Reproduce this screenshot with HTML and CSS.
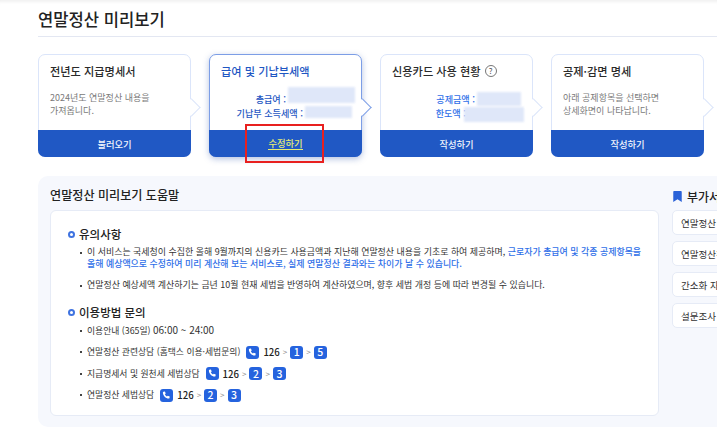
FILE: index.html
```html
<!DOCTYPE html>
<html lang="ko">
<head>
<meta charset="utf-8">
<title>연말정산 미리보기</title>
<link rel="stylesheet" href="styles.css">
</head>
<body>
<div class="page">
  <h1 class="title">연말정산 미리보기</h1>
  <div class="cards">
    <section class="card">
      <div class="card-body">
        <h2 class="card-title">전년도 지급명세서</h2>
        <p class="card-desc">2024년도 연말정산 내용을<br>가져옵니다.</p>
      </div>
      <a class="card-btn">불러오기</a>
      <span class="arrow"></span>
    </section>
    <section class="card active">
      <div class="card-body">
        <h2 class="card-title">급여 및 기납부세액</h2>
        <div class="amounts">
          <div class="amount">총급여 : <span class="mask w1"></span></div>
          <div class="amount">기납부 소득세액 : <span class="mask w2"></span></div>
        </div>
      </div>
      <a class="card-btn"><span class="edit">수정하기</span></a>
      <span class="arrow"></span>
      <span class="highlight"></span>
    </section>
    <section class="card">
      <div class="card-body">
        <h2 class="card-title">신용카드 사용 현황 <span class="help">?</span></h2>
        <div class="amounts">
          <div class="amount">공제금액 : <span class="mask w3"></span></div>
          <div class="amount">한도액 : <span class="mask w4"></span></div>
        </div>
      </div>
      <a class="card-btn">작성하기</a>
      <span class="arrow"></span>
    </section>
    <section class="card">
      <div class="card-body">
        <h2 class="card-title">공제·감면 명세</h2>
        <p class="card-desc">아래 공제항목을 선택하면<br>상세화면이 나타납니다.</p>
      </div>
      <a class="card-btn">작성하기</a>
      <span class="arrow"></span>
    </section>
  </div>
  <div class="panel">
    <div class="help-col">
      <h2 class="panel-title">연말정산 미리보기 도움말</h2>
      <div class="help-box">
        <h3 class="sub">유의사항</h3>
        <ul class="list first">
          <li>이 서비스는 국세청이 수집한 올해 9월까지의 신용카드 사용금액과 지난해 연말정산 내용을 기초로 하여 제공하며, <b class="blue">근로자가 총급여 및 각종 공제항목을<br>올해 예상액으로 수정하여 미리 계산해 보는 서비스로, 실제 연말정산 결과와는 차이가 날 수 있습니다.</b></li>
          <li>연말정산 예상세액 계산하기는 금년 10월 현재 세법을 반영하여 계산하였으며, 향후 세법 개정 등에 따라 변경될 수 있습니다.</li>
        </ul>
        <h3 class="sub second">이용방법 문의</h3>
        <ul class="list">
          <li>이용안내 (365일) <span class="time">06:00 ~ 24:00</span></li>
          <li class="tel">연말정산 관련상담 (홈택스 이용·세법문의)
            <span class="phone"><svg viewBox="0 0 14 14"><path d="M3.200 2.200 5 1.900l1 2.600-1.100 1c.5 1.300 1.400 2.200 2.700 2.800l1-1.100 2.500 1-.3 1.900c-.1.500-.5.800-1 .8C6 10.800 2.500 7.300 2.400 3.200c0-.5.300-.9.800-1Z" fill="#fff"/></svg></span>
            <b>126</b><i>&gt;</i><span class="num">1</span><i>&gt;</i><span class="num">5</span></li>
          <li class="tel">지급명세서 및 원천세 세법상담
            <span class="phone"><svg viewBox="0 0 14 14"><path d="M3.200 2.200 5 1.900l1 2.600-1.100 1c.5 1.300 1.400 2.200 2.700 2.800l1-1.100 2.500 1-.3 1.900c-.1.500-.5.800-1 .8C6 10.800 2.500 7.300 2.400 3.200c0-.5.300-.9.800-1Z" fill="#fff"/></svg></span>
            <b>126</b><i>&gt;</i><span class="num">2</span><i>&gt;</i><span class="num">3</span></li>
          <li class="tel">연말정산 세법상담
            <span class="phone"><svg viewBox="0 0 14 14"><path d="M3.200 2.200 5 1.900l1 2.600-1.100 1c.5 1.300 1.400 2.200 2.700 2.800l1-1.100 2.500 1-.3 1.900c-.1.500-.5.800-1 .8C6 10.800 2.500 7.300 2.400 3.200c0-.5.300-.9.800-1Z" fill="#fff"/></svg></span>
            <b>126</b><i>&gt;</i><span class="num">2</span><i>&gt;</i><span class="num">3</span></li>
        </ul>
      </div>
    </div>
    <aside class="side">
      <h2 class="side-title"><svg class="bookmark" viewBox="0 0 10 13"><path d="M1 0h8a1 1 0 0 1 1 1v12L5 9.800 0 13V1a1 1 0 0 1 1-1Z" fill="#2a62d8"/></svg>부가서비스</h2>
      <a class="side-item">연말정산 자료</a>
      <a class="side-item">연말정산간소화</a>
      <a class="side-item">간소화 자료</a>
      <a class="side-item">설문조사 참여</a>
    </aside>
  </div>
</div>
</body>
</html>
```
FILE: styles.css
```css
*, *::before, *::after { box-sizing: border-box; }
html, body { margin: 0; height: 431px; overflow: hidden; background: #fff; }
body {
  font-family: "Noto Sans CJK KR", "Noto Sans", sans-serif;
  color: #222;
  box-shadow: inset 0 4px 3px -2px #f1f1f1;
}
.page { width: 717px; padding: 0 0 0 38px; overflow: hidden; height: 431px; }
.title {
  margin: 0; height: 37px; padding-top: 7px;
  font-size: 16.600px; line-height: 25px; font-weight: 500; color: #222;
  border-bottom: 1px solid #e3e7f2;
  width: 679px;
}
.cards { display: flex; gap: 18px; margin-top: 17px; }
.card {
  position: relative; width: 153px; height: 103px;
  display: flex; flex-direction: column;
  background: #fff; border: 1px solid #dbe5fa; border-radius: 7px;
}
.card.active { border-color: #7c9ee6; box-shadow: 0 2px 6px rgba(40,80,170,.35); }
.card-body { flex: 1; padding: 7px 11px 0; min-height: 0; }
.card-title {
  margin: 0; font-size: 11.200px; line-height: 18px; font-weight: 500; color: #2a2a2a;
  white-space: nowrap; display: flex; align-items: center; gap: 4px;
}
.active .card-title { color: #1f57c3; }
.card-desc { margin: 12px 0 0; font-size: 9px; line-height: 12.500px; color: #7a7a7a; white-space: nowrap; }
.amounts { margin-top: 12px; }
.amount {
  height: 14px; font-size: 9.100px; line-height: 14px; font-weight: 500; color: #2f6fe8;
  white-space: nowrap; display: flex; justify-content: flex-end; margin-right: -5px;
}
.active .amount { color: #1f57c3; }
.mask { display: block; flex: none; margin-left: 2px; background: #dfe7f9; filter: blur(1px); }
.w1 { width: 67px; height: 16px; transform: translateY(-5px); }
.w2 { width: 47px; height: 12px; margin-right: 3px; }
.w3 { width: 44px; height: 14px; margin-right: 5px; }
.w4 { width: 60px; height: 15px; margin-left: -2px; margin-right: 2px; transform: translateY(1px); }
.card-btn {
  display: flex; align-items: center; justify-content: center;
  height: 27px; margin: 0 -1px -1px; flex: none;
  background: #2058c4; color: #f2f5fc; font-size: 9.300px; font-weight: 500;
  border-radius: 0 0 7px 7px;
}
.edit { color: #e4ea74; border-bottom: 1px solid #e4ea74; line-height: 12px; }
.arrow {
  position: absolute; right: -7.500px; top: 46px; width: 13px; height: 13px;
  background: #fff; border-top: 1px solid #dbe5fa; border-right: 1px solid #dbe5fa;
  transform: rotate(45deg);
}
.active .arrow { border-color: #7c9ee6; }
.highlight {
  position: absolute; left: 35px; top: 69px; width: 79px; height: 39px;
  border: 2px solid #e8201f; z-index: 2;
}
.help {
  display: inline-flex; align-items: center; justify-content: center; flex: none;
  width: 12px; height: 12px; border: 1px solid #777; border-radius: 50%;
  font-size: 8px; line-height: 1; font-weight: 400; color: #555;
}
.panel {
  display: flex; gap: 13px; margin-top: 19px;
  width: 720px; height: 251px; padding: 9px 0 0 12px;
  background: #f6f8fd; border-radius: 10px 0 0 10px;
}
.help-col { width: 609px; flex: none; }
.panel-title { margin: 0; height: 22px; font-size: 12.100px; line-height: 20px; font-weight: 500; color: #222; }
.help-box {
  margin-top: 3px; height: 206px; padding: 15px 15px 0 17px;
  background: #fff; border: 1px solid #e6ebf6; border-radius: 6px;
}
.sub {
  margin: 0; position: relative; padding-left: 11px;
  font-size: 11.500px; line-height: 17px; font-weight: 500; color: #222;
}
.sub::before {
  content: ""; position: absolute; left: 0; top: 5px; width: 7px; height: 7px;
  border: 2px solid #3f73e0; border-radius: 50%;
}
.sub.second { margin-top: 13px; }
.list { list-style: none; margin: 3px 0 0; padding: 0 0 0 12px; font-size: 8.800px; line-height: 12px; color: #333; }
.list.first { font-size: 8.950px; white-space: nowrap; }
.list li { position: relative; padding-left: 7px; margin-bottom: 8px; }
.list li::before {
  content: ""; position: absolute; left: 0; top: 6px; width: 2px; height: 2px; background: #444;
}
.first li:first-child { margin-bottom: 9px; }
.blue { font-weight: 500; color: #2f6fe8; }
.time { font-size: 10px; }
.list .tel { display: flex; align-items: center; white-space: nowrap; height: 14px; margin-bottom: 7.500px; }
.phone {
  display: inline-flex; align-items: center; justify-content: center;
  width: 13px; height: 13px; margin: 0 4px 0 6px; background: #2563de; border-radius: 3px;
}
.phone svg { width: 11px; height: 11px; }
.tel b { font-size: 9.600px; font-weight: 500; color: #222; }
.tel i { font-style: normal; font-size: 8px; color: #888; margin: 0 3px; }
.num {
  display: inline-flex; align-items: center; justify-content: center;
  width: 13px; height: 13px; background: #2563de; border-radius: 3px;
  color: #fff; font-size: 10.500px; font-weight: 500;
}
.side { width: 100px; flex: none; }
.side-title {
  margin: 0; height: 22px; display: flex; align-items: center; gap: 5px; padding-left: 1px;
  font-size: 12px; font-weight: 500; color: #222; white-space: nowrap;
}
.bookmark { width: 9px; height: 11px; flex: none; }
.side-item {
  display: flex; align-items: center; height: 25px; margin: 3px 0 6px; padding-left: 8px;
  background: #fff; border: 1px solid #e6ebf6; border-radius: 5px;
  font-size: 9.500px; color: #333; white-space: nowrap;
}
```
